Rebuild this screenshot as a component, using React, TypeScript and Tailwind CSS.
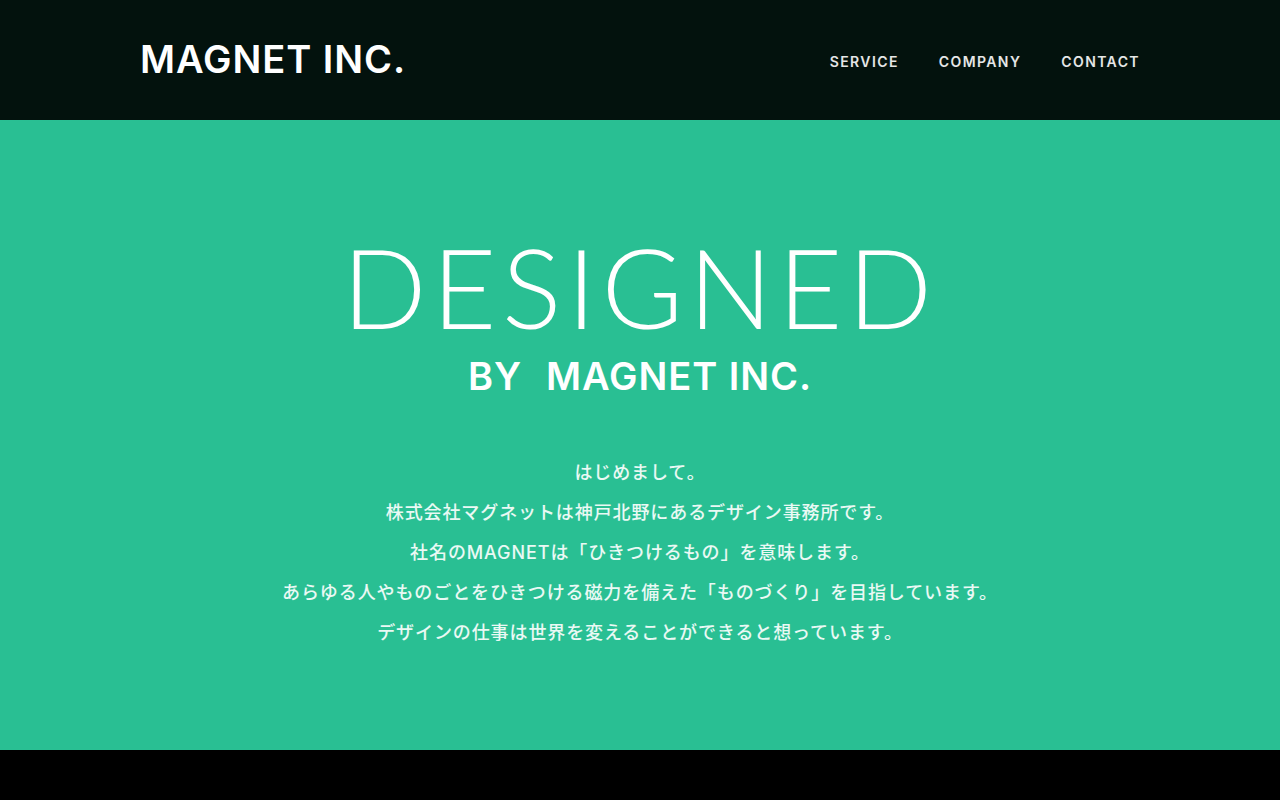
const navItems = [
  { label: 'SERVICE', href: '#service' },
  { label: 'COMPANY', href: '#company' },
  { label: 'CONTACT', href: '#contact' },
];

const introLines = [
  'はじめまして。',
  '株式会社マグネットは神戸北野にあるデザイン事務所です。',
  '社名のMAGNETは「ひきつけるもの」を意味します。',
  'あらゆる人やものごとをひきつける磁力を備えた「ものづくり」を目指しています。',
  'デザインの仕事は世界を変えることができると想っています。',
];

function Header() {
  return (
    <header className="bg-[#03120d]">
      <div className="mx-auto flex h-[120px] max-w-[1000px] items-center justify-between">
        <a href="#top" className="pb-0.5 text-[38px] leading-10 font-semibold tracking-wide text-white">
          MAGNET INC.
        </a>
        <nav className="flex gap-10 pt-1">
          {navItems.map((item) => (
            <a key={item.href} href={item.href} className="text-sm font-semibold tracking-widest text-white/90">
              {item.label}
            </a>
          ))}
        </nav>
      </div>
    </header>
  );
}

function Hero() {
  return (
    <main id="top" className="bg-[#29bf93] px-6 pt-[106px] pb-[97px] text-center text-white">
      <h1>
        <span className="block font-['Lato',sans-serif] text-[111px] leading-[120px] font-light tracking-wider">
          DESIGNED
        </span>
        <span className="flex justify-center gap-6 text-[38px] leading-[60px] font-semibold tracking-wide">
          <span>BY</span>
          <span>MAGNET INC.</span>
        </span>
      </h1>
      <div className="pt-[47px] text-lg leading-10 font-medium tracking-wider text-white/90">
        {introLines.map((line) => (
          <p key={line}>{line}</p>
        ))}
      </div>
    </main>
  );
}

export default function App() {
  return (
    <div lang="ja" className="min-h-screen bg-black font-['Inter','Noto_Sans_CJK_JP',sans-serif]">
      <Header />
      <Hero />
    </div>
  );
}
